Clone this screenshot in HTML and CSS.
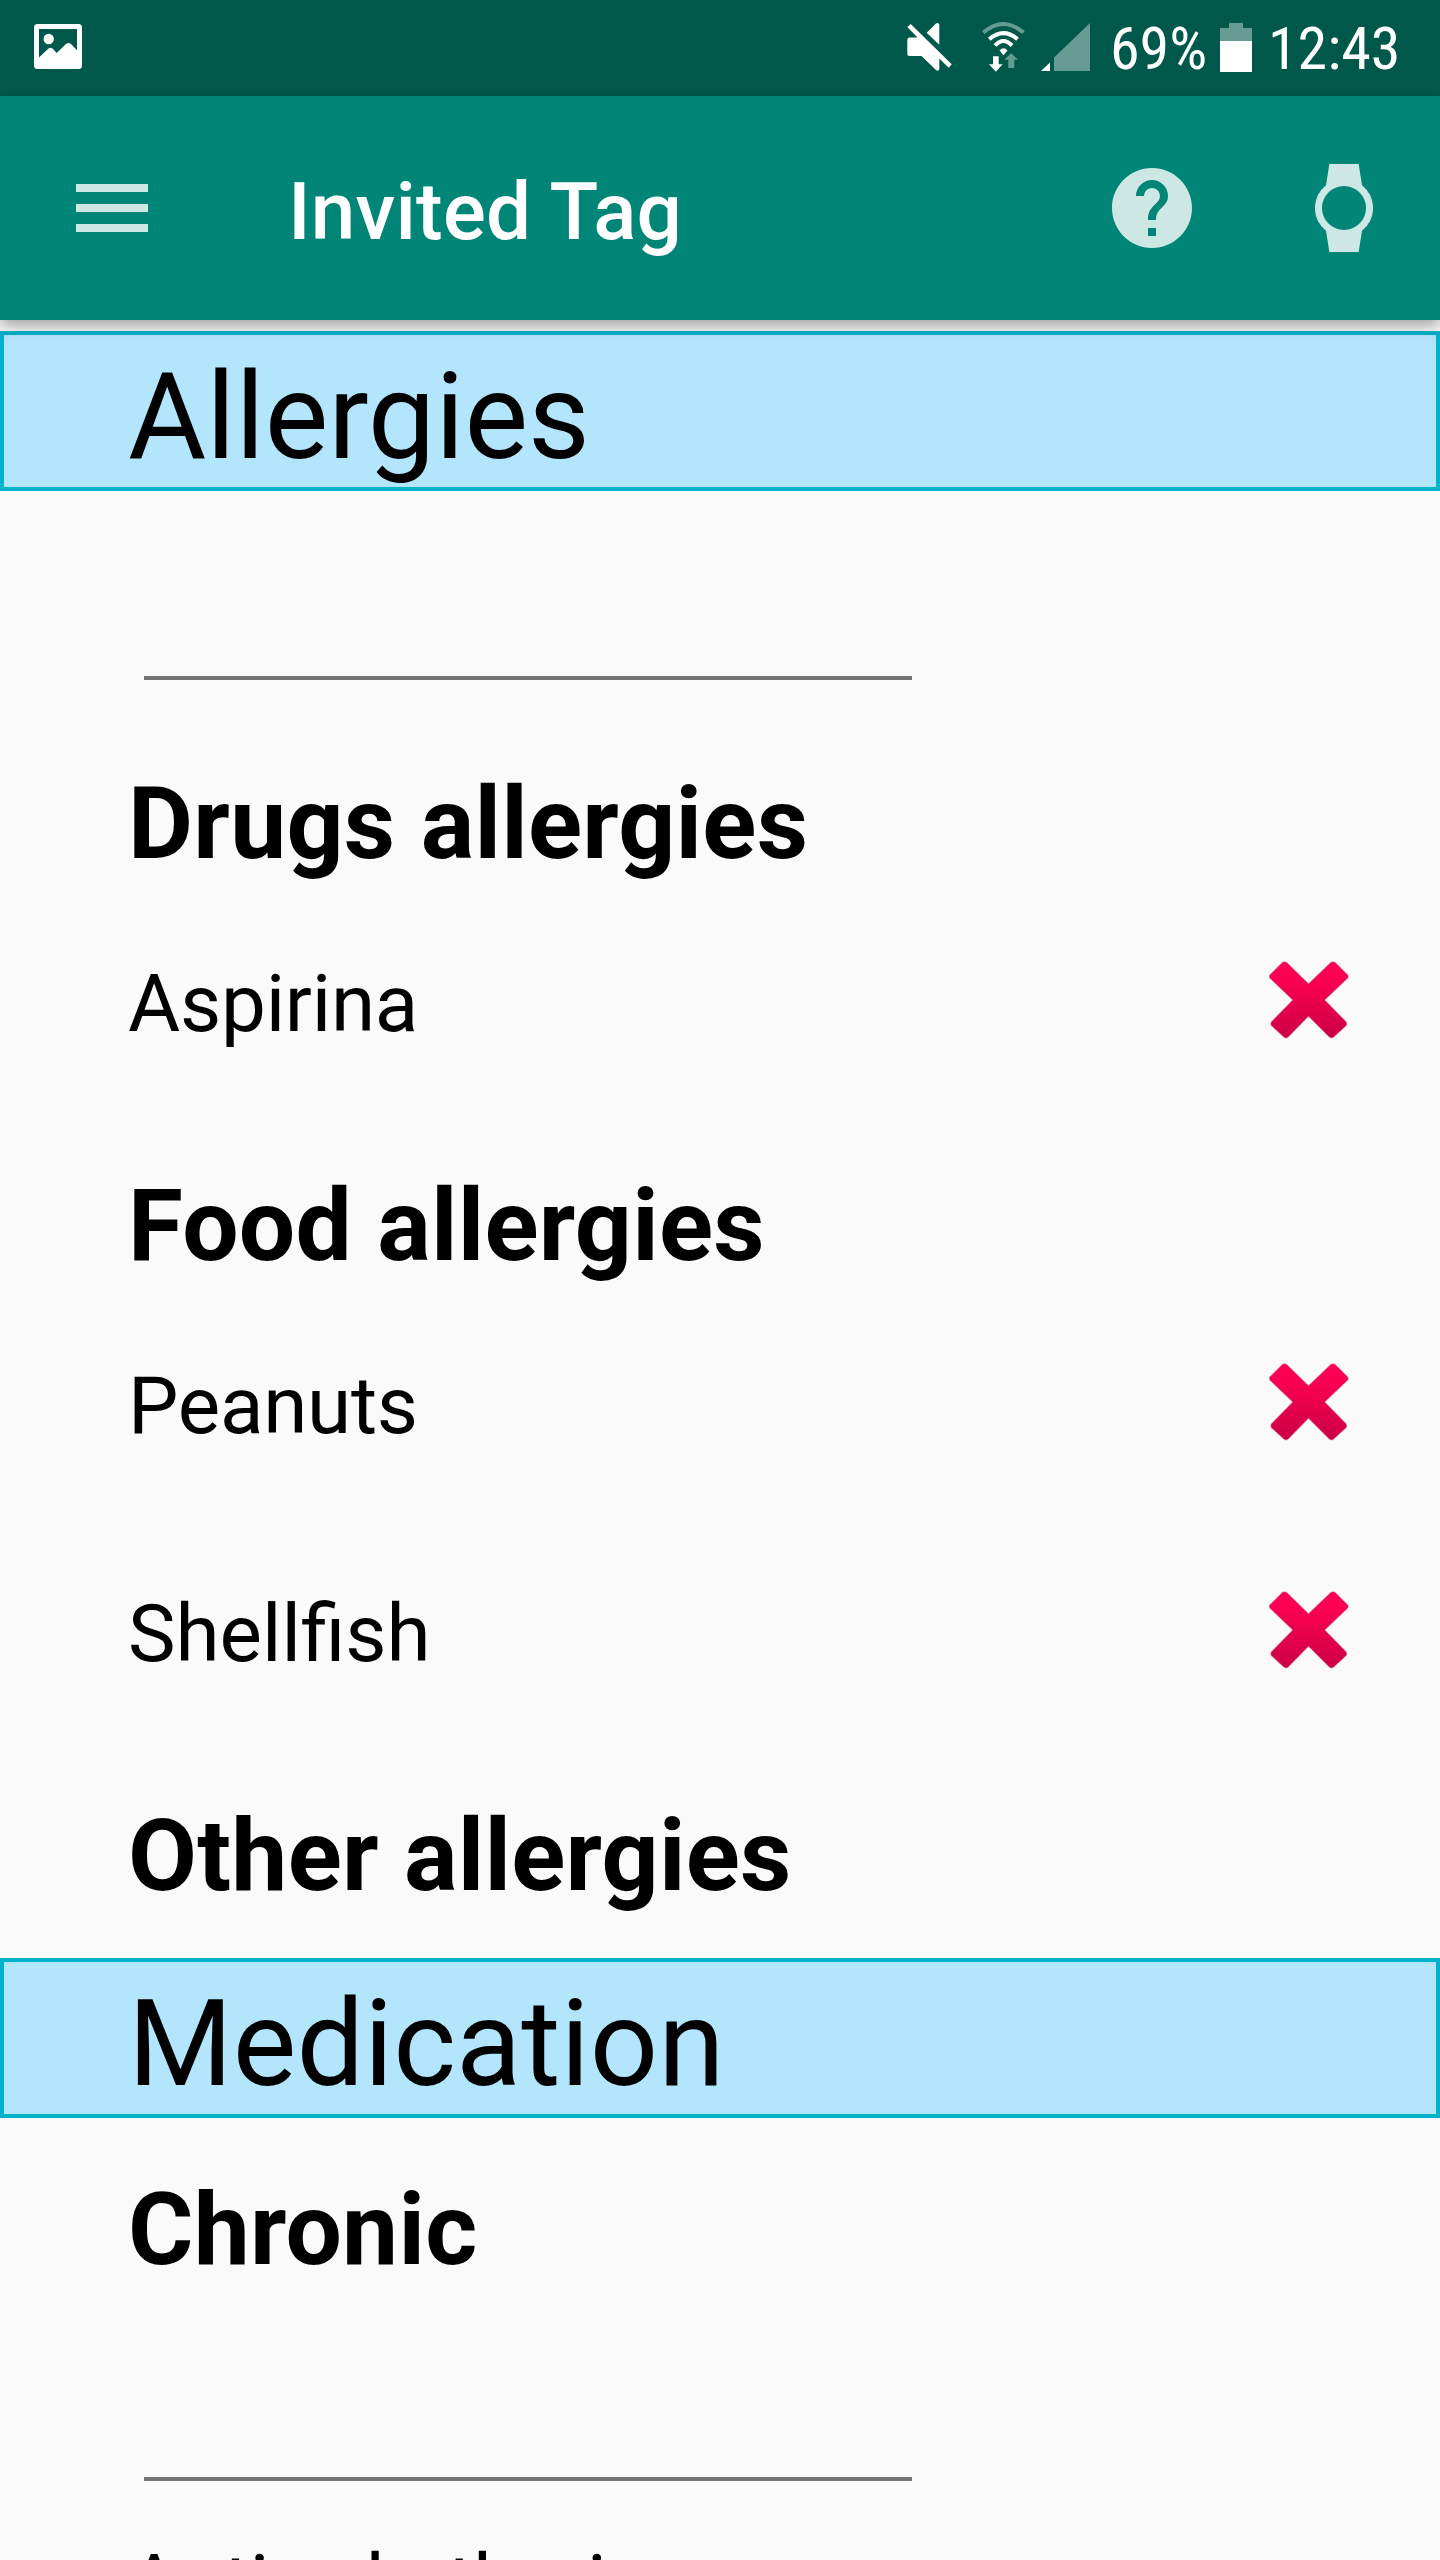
FILE: index.html
```
<!DOCTYPE html>
<html lang="en">
<head>
<meta charset="utf-8">
<title>Invited Tag</title>
<link rel="stylesheet" href="styles.css">
</head>
<body>
<svg class="defs" width="0" height="0" aria-hidden="true">
  <defs>
    <linearGradient id="cross-fill" x1="0" y1="0" x2="0" y2="1">
      <stop offset="0" stop-color="#ff0055"/>
      <stop offset="0.25" stop-color="#fa0052"/>
      <stop offset="1" stop-color="#cc0044"/>
    </linearGradient>
    <symbol id="cross" viewBox="0 0 80 78">
      <path d="M17.500 1.500 L39.500 23 L62 1.500 Q64 0.500 66 1.500 L78.500 14 Q79.500 15.500 78.500 17 L55.500 39 L77 61 Q78 63 77 64.500 L64.500 76 Q62.500 77.500 60.500 76 L39.500 55 L19 76 Q17 77.500 15 76 L2.500 64.500 Q1.500 63 2.500 61 L24 39 L1 17 Q0 15.500 1 14 L13.500 1.500 Q15.500 0.500 17.500 1.500 Z" fill="url(#cross-fill)" stroke="#c8004a" stroke-opacity=".35" stroke-width="1.500"/>
    </symbol>
  </defs>
</svg>
<div class="screen">
  <header class="statusbar">
    <svg class="ic-picture" viewBox="0 0 48 45"><path fill="#fff" fill-rule="evenodd" d="M3.500 0H44.500Q48 0 48 3.500V41.500Q48 45 44.500 45H3.500Q0 45 0 41.500V3.500Q0 0 3.500 0ZM5 5V33.500L14 25Q16.500 22.500 19 25L22.700 29L32 20Q34.600 17.800 37 20L43 26.300V5Z"/><circle cx="14.700" cy="15" r="5.200" fill="#fff"/></svg>
    <div class="status-right">
      <svg class="ic-mute" viewBox="0 0 45 50"><path fill="#fff" d="M0.300 5L3.700 2L44.700 42.300L41.700 45.700L32.300 36.500V47.500Q31.500 49.500 29 48L14.500 34H2.500Q0.300 34 0.300 32V18Q0.300 15.500 2.500 15.500H10.500ZM19.700 10.700L29 1.500Q31.500 0 32.300 2.500V22.700Z"/></svg>
      <svg class="ic-wifi" viewBox="0 0 43 50"><g fill="none" stroke="#fff" stroke-width="4"><path d="M1.300 10.600Q21.400 -6.500 41.500 10.600" stroke="#669b93"/><path d="M7.300 17.200Q21.400 5 35.500 17.200"/><path d="M13 23.500Q21.400 14.500 30 23.500"/></g><path fill="#fff" d="M17.500 28.500Q21.500 24 25.500 28.500L21.500 33.300Z"/><path fill="#fff" d="M11 34.300H16.700V42.300H20.700L13.800 49.700L7 42.300H11Z"/><path fill="#669b93" d="M29.200 31.300L36 37.700H32.300V46H26.300V37.700H22.300Z"/></svg>
      <svg class="ic-signal" viewBox="0 0 49 48"><path fill="#fff" d="M0 48L9 39.500V48Z"/><path fill="#669b93" d="M13 48V34.500L49 0V48Z"/></svg>
      <span class="battery-text">69%</span>
      <svg class="ic-battery" viewBox="0 0 32 49"><path fill="#669b93" d="M0 5H9V0H23V5H32V18H0Z"/><path fill="#fff" d="M0 18H32V49H0Z"/></svg>
      <span class="clock">12:43</span>
    </div>
  </header>
  <nav class="toolbar">
    <svg class="ic-menu" viewBox="0 0 72 48"><path fill="#cce7e4" d="M0 0H72V8H0ZM0 20H72V28H0ZM0 40H72V48H0Z"/></svg>
    <h1 class="title">Invited Tag</h1>
    <svg class="ic-help" viewBox="2 2 20 20"><path fill="#cce7e4" d="M12 2C6.480 2 2 6.480 2 12s4.480 10 10 10 10-4.480 10-10S17.520 2 12 2zm1 17h-2v-2h2v2zm2.070-7.750l-.9.920C13.450 12.900 13 13.500 13 15h-2v-.5c0-1.100.45-2.100 1.170-2.830l1.240-1.260c.37-.36.59-.86.59-1.410 0-1.100-.9-2-2-2s-2 .9-2 2H8c0-2.210 1.790-4 4-4s4 1.790 4 4c0 .88-.36 1.680-.93 2.250z"/></svg>
    <svg class="ic-watch" viewBox="0 0 58 88"><path fill="#cce7e4" fill-rule="evenodd" d="M14.300 0H43.700L47 21.200A29 29 0 0 1 47 66.800L43.700 88H14.300L11 66.800A29 29 0 0 1 11 21.200ZM29 22A22 22 0 1 0 29 66A22 22 0 1 0 29 22Z"/></svg>
  </nav>
  <main class="content">
    <h2 class="section">Allergies</h2>
    <div class="field field-first"></div>
    <h3 class="group">Drugs allergies</h3>
    <div class="item"><span>Aspirina</span><svg class="remove"><use href="#cross"/></svg></div>
    <h3 class="group">Food allergies</h3>
    <div class="item"><span>Peanuts</span><svg class="remove"><use href="#cross"/></svg></div>
    <div class="item"><span class="ligature">Shellfish</span><svg class="remove"><use href="#cross"/></svg></div>
    <h3 class="group">Other allergies</h3>
    <h2 class="section">Medication</h2>
    <h3 class="group">Chronic</h3>
    <div class="field"></div>
    <div class="item"><span>Antiarrhythmic</span></div>
  </main>
</div>
</body>
</html>
```

FILE: styles.css
```
* { box-sizing: border-box; }
body { margin: 0; font-family: Roboto, sans-serif; background: #fafafa; color: #000; }
h1, h2, h3 { margin: 0; }
svg { display: block; flex: none; }
.defs { position: absolute; }
.screen { width: 1440px; height: 2560px; overflow: hidden; }

.statusbar { display: flex; justify-content: space-between; height: 96px; padding-left: 34px; background: #00584b; color: #fff; }
.ic-picture { width: 48px; height: 45px; margin-top: 24px; }
.status-right { display: flex; width: 533px; }
.ic-mute { width: 45px; height: 50px; margin-top: 22px; }
.ic-wifi { width: 43px; height: 50px; margin: 22px 0 0 30px; }
.ic-signal { width: 49px; height: 48px; margin: 23px 0 0 16px; }
.battery-text, .clock { font-family: "Roboto Condensed", Roboto, sans-serif; font-size: 60px; line-height: 98px; white-space: nowrap; }
.battery-text { width: 97px; margin-left: 20px; }
.ic-battery { width: 32px; height: 49px; margin: 23px 0 0 13px; }
.clock { margin-left: 16px; }

.toolbar { position: relative; z-index: 1; display: flex; align-items: center; height: 224px; padding: 0 67px 0 76px; background: #008577; box-shadow: 0 6px 14px rgba(0, 0, 0, .35); }
.ic-menu { width: 72px; height: 48px; }
.title { flex: 1; margin-left: 140px; padding-top: 8px; font-size: 80px; font-weight: 500; line-height: 94px; letter-spacing: .2px; color: #fff; }
.ic-help { width: 80px; height: 80px; }
.ic-watch { width: 58px; height: 88px; margin-left: 123px; }

.content { padding-top: 11px; }
.section { height: 160px; padding-left: 124px; border: 4px solid #00b3cb; background: #b3e5fc; font-size: 120px; font-weight: 400; line-height: 164px; }
.field { width: 768px; height: 149px; margin-left: 144px; border-bottom: 4px solid #757575; }
.field-first { height: 189px; }
.group { height: 161px; margin: 13px 0 0 128px; font-size: 100px; line-height: 117px; letter-spacing: .28px; }
.section + .group { margin-top: 53px; }
.field + .group { margin-top: 85px; }
.item { display: flex; justify-content: space-between; height: 197px; margin-top: 31px; padding: 0 91px 0 128px; font-size: 80px; line-height: 94px; letter-spacing: -.25px; }
.field + .item { margin-top: 56px; }
.ligature { letter-spacing: normal; }
.remove { width: 80px; height: 78px; margin-top: 4px; }
```
